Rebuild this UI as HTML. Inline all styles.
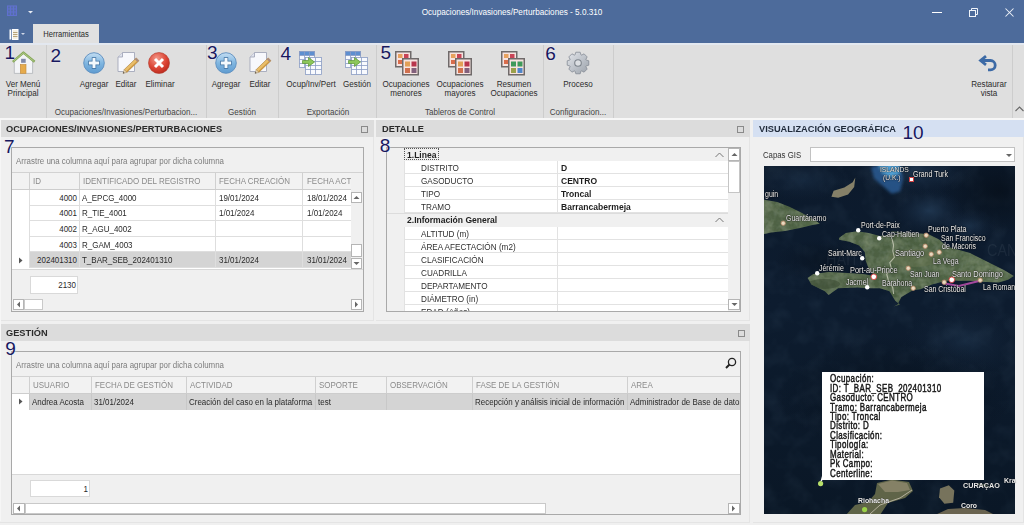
<!DOCTYPE html><html><head><meta charset="utf-8"><style>
html,body{margin:0;padding:0;width:1024px;height:525px;overflow:hidden;background:#e3e3e3;font-family:"Liberation Sans",sans-serif;}
#root{position:relative;width:1024px;height:525px;overflow:hidden;}
.t{position:absolute;white-space:nowrap;}
.n{position:absolute;color:#18185e;line-height:1;font-family:"Liberation Sans",sans-serif;text-shadow:0 0 2px rgba(240,240,255,0.9);}
</style></head><body><div id="root">
<div style="position:absolute;left:0px;top:0px;width:1024px;height:43px;background:#4d6b9b"></div>
<div class="t" style="left:512px;top:6.0px;font-size:9.7px;font-weight:400;color:#ffffff;line-height:12px;transform:translateX(-50%) scaleX(0.8428);transform-origin:50% 0;">Ocupaciones/Invasiones/Perturbaciones - 5.0.310</div>
<div style="position:absolute;left:932px;top:12px;width:10px;height:1px;background:#fff"></div>
<svg style="position:absolute;left:969px;top:8px" width="9" height="9" viewBox="0 0 9 9"><rect x="0.5" y="2.5" width="6" height="6" fill="none" stroke="#f0f4fa"/><path d="M2.5 2.5V0.5H8.5V6.5H6.5" fill="none" stroke="#f0f4fa"/></svg>
<svg style="position:absolute;left:1005px;top:8px" width="9" height="9" viewBox="0 0 9 9"><path d="M0.5 0.5L8.5 8.5M8.5 0.5L0.5 8.5" stroke="#f0f4fa" stroke-width="1.05"/></svg>
<svg style="position:absolute;left:6px;top:4px" width="12" height="13" viewBox="0 0 12 13"><g opacity="0.8"><rect x="1" y="1.5" width="9.5" height="10" fill="#6a78d8" opacity="0.35"/><g stroke="#6472dc" stroke-width="1" fill="none"><rect x="1.5" y="2" width="9" height="9.5"/><path d="M4.5 2V11.5M7.5 2V11.5M1.5 5H10.5M1.5 8H10.5"/></g></g></svg>
<svg style="position:absolute;left:27.5px;top:11px" width="5" height="3" viewBox="0 0 5 3"><path d="M0 0H5L2.5 2.5Z" fill="#e8ecf4"/></svg>
<svg style="position:absolute;left:9px;top:29px" width="10" height="11" viewBox="0 0 10 11"><rect x="0.5" y="0.5" width="1.8" height="10" fill="#fff"/><rect x="3.5" y="0.5" width="5.5" height="10" fill="#f4f0e4" stroke="#fff"/><path d="M4 3.5H8.5M4 5.5H8.5M4 7.5H8.5" stroke="#b8a47a"/></svg>
<svg style="position:absolute;left:21px;top:33px" width="4" height="3" viewBox="0 0 4 3"><path d="M0 0H4L2 2Z" fill="#d0d8e8"/></svg>
<div style="position:absolute;left:33px;top:24px;width:66px;height:21px;background:#e1e1e1"></div>
<div class="t" style="left:66px;top:28.0px;font-size:9.7px;font-weight:400;color:#2a2a2a;line-height:12px;transform:translateX(-50%) scaleX(0.784);transform-origin:50% 0;">Herramientas</div>
<div style="position:absolute;left:0px;top:43px;width:1024px;height:2px;background:#e3e8f0"></div>
<div style="position:absolute;left:0px;top:45px;width:1024px;height:73px;background:#dfdfdf"></div>
<div style="position:absolute;left:46px;top:45px;width:1px;height:73px;background:#cdcdcd"></div>
<div style="position:absolute;left:206px;top:45px;width:1px;height:73px;background:#cdcdcd"></div>
<div style="position:absolute;left:278px;top:45px;width:1px;height:73px;background:#cdcdcd"></div>
<div style="position:absolute;left:376px;top:45px;width:1px;height:73px;background:#cdcdcd"></div>
<div style="position:absolute;left:543px;top:45px;width:1px;height:73px;background:#cdcdcd"></div>
<div style="position:absolute;left:613px;top:45px;width:1px;height:73px;background:#cdcdcd"></div>
<div style="position:absolute;left:1012px;top:45px;width:1px;height:73px;background:#cdcdcd"></div>
<svg style="position:absolute;left:11px;top:50px" width="26" height="25" viewBox="0 0 26 25"><path d="M3.3 10.5 L12.4 3.2 L21.6 10.5 V23.4 H3.3 Z" fill="#f3f4f7" stroke="#aeb2b8" stroke-width="0.8"/>
<path d="M1.8 11.8 L12.4 2.6 L23.6 11.8" fill="none" stroke="#86a85a" stroke-width="2.4" stroke-linejoin="round"/>
<path d="M2.6 11.2 L12.4 2.9 L22.8 11.2" fill="none" stroke="#b9d08e" stroke-width="0.8" stroke-linejoin="round"/>
<rect x="10.1" y="8.8" width="4.6" height="4" fill="#7f89a8"/>
<rect x="9.3" y="14.5" width="5.7" height="8.8" fill="#e6ab4c" stroke="#c28634" stroke-width="0.6"/></svg>
<div class="n" style="left:4.5px;top:43px;font-size:19px">1</div>
<div class="t" style="left:23px;top:77.6px;font-size:9.7px;font-weight:400;color:#2c2c2c;line-height:12px;transform:translateX(-50%) scaleX(0.833);transform-origin:50% 0;">Ver Menú</div>
<div class="t" style="left:23px;top:87.0px;font-size:9.7px;font-weight:400;color:#2c2c2c;line-height:12px;transform:translateX(-50%) scaleX(0.833);transform-origin:50% 0;">Principal</div>
<div class="n" style="left:50.5px;top:46px;font-size:19px">2</div>
<svg style="position:absolute;left:83px;top:52px" width="22" height="22" viewBox="0 0 22 22"><defs><linearGradient id="gb" x1="0" y1="0" x2="0" y2="1"><stop offset="0" stop-color="#c4def3"/><stop offset="0.5" stop-color="#80b6e0"/><stop offset="1" stop-color="#5f9bd0"/></linearGradient></defs>
<circle cx="11" cy="11" r="10.3" fill="url(#gb)" stroke="#5d8fbf" stroke-width="0.9"/>
<path d="M11 5.2V16.8M5.2 11H16.8" stroke="#3f6f9f" stroke-width="4.4"/>
<path d="M11 5.9V16.1M5.9 11H16.1" stroke="#f4f9fd" stroke-width="3"/></svg>
<svg style="position:absolute;left:117px;top:52px" width="24" height="24" viewBox="0 0 24 24"><path d="M5.5 0.5 H17.5 V19.5 H1 V5 Z" fill="#f7f8fc" stroke="#a4a8ba" stroke-width="0.9"/>
<path d="M5.5 0.5 V5 H1" fill="#dfe2ec" stroke="#a4a8ba" stroke-width="0.9"/>
<polygon points="7.2,17.6 9.84,20.34 21.92,8.67 19.28,5.93" fill="#e9bd68" stroke="#a77d3a" stroke-width="0.6"/>
<polygon points="9.84,20.34 21.92,8.67 21.2,7.95 9.1,19.6" fill="#c8933e"/>
<polygon points="19.28,5.93 21.92,8.67 20.48,10.06 17.84,7.32" fill="#a88a80"/>
<polygon points="6,21.4 7.2,17.6 9.84,20.34" fill="#ead8b4" stroke="#8a6a40" stroke-width="0.4"/>
<polygon points="6,21.4 6.5,19.8 7.6,20.9" fill="#444"/></svg>
<svg style="position:absolute;left:148px;top:52px" width="22" height="22" viewBox="0 0 22 22"><defs><radialGradient id="gr" cx="40%" cy="30%" r="75%"><stop offset="0" stop-color="#f39a8a"/><stop offset="0.6" stop-color="#dc4535"/><stop offset="1" stop-color="#b8281c"/></radialGradient></defs>
<circle cx="11" cy="11" r="10.5" fill="url(#gr)" stroke="#b03a2c" stroke-width="0.6"/>
<path d="M7 7L15 15M15 7L7 15" stroke="#fff" stroke-width="3"/></svg>
<div class="t" style="left:94.4px;top:77.6px;font-size:9.7px;font-weight:400;color:#2c2c2c;line-height:12px;transform:translateX(-50%) scaleX(0.833);transform-origin:50% 0;">Agregar</div>
<div class="t" style="left:126.4px;top:77.6px;font-size:9.7px;font-weight:400;color:#2c2c2c;line-height:12px;transform:translateX(-50%) scaleX(0.833);transform-origin:50% 0;">Editar</div>
<div class="t" style="left:159.5px;top:77.6px;font-size:9.7px;font-weight:400;color:#2c2c2c;line-height:12px;transform:translateX(-50%) scaleX(0.833);transform-origin:50% 0;">Eliminar</div>
<div class="t" style="left:126px;top:105.7px;font-size:9.7px;font-weight:400;color:#454545;line-height:12px;transform:translateX(-50%) scaleX(0.833);transform-origin:50% 0;">Ocupaciones/Invasiones/Perturbacion...</div>
<div class="n" style="left:207px;top:43px;font-size:19px">3</div>
<svg style="position:absolute;left:215px;top:52px" width="22" height="22" viewBox="0 0 22 22"><defs><linearGradient id="gb" x1="0" y1="0" x2="0" y2="1"><stop offset="0" stop-color="#c4def3"/><stop offset="0.5" stop-color="#80b6e0"/><stop offset="1" stop-color="#5f9bd0"/></linearGradient></defs>
<circle cx="11" cy="11" r="10.3" fill="url(#gb)" stroke="#5d8fbf" stroke-width="0.9"/>
<path d="M11 5.2V16.8M5.2 11H16.8" stroke="#3f6f9f" stroke-width="4.4"/>
<path d="M11 5.9V16.1M5.9 11H16.1" stroke="#f4f9fd" stroke-width="3"/></svg>
<svg style="position:absolute;left:249px;top:52px" width="24" height="24" viewBox="0 0 24 24"><path d="M5.5 0.5 H17.5 V19.5 H1 V5 Z" fill="#f7f8fc" stroke="#a4a8ba" stroke-width="0.9"/>
<path d="M5.5 0.5 V5 H1" fill="#dfe2ec" stroke="#a4a8ba" stroke-width="0.9"/>
<polygon points="7.2,17.6 9.84,20.34 21.92,8.67 19.28,5.93" fill="#e9bd68" stroke="#a77d3a" stroke-width="0.6"/>
<polygon points="9.84,20.34 21.92,8.67 21.2,7.95 9.1,19.6" fill="#c8933e"/>
<polygon points="19.28,5.93 21.92,8.67 20.48,10.06 17.84,7.32" fill="#a88a80"/>
<polygon points="6,21.4 7.2,17.6 9.84,20.34" fill="#ead8b4" stroke="#8a6a40" stroke-width="0.4"/>
<polygon points="6,21.4 6.5,19.8 7.6,20.9" fill="#444"/></svg>
<div class="t" style="left:226px;top:77.6px;font-size:9.7px;font-weight:400;color:#2c2c2c;line-height:12px;transform:translateX(-50%) scaleX(0.833);transform-origin:50% 0;">Agregar</div>
<div class="t" style="left:260px;top:77.6px;font-size:9.7px;font-weight:400;color:#2c2c2c;line-height:12px;transform:translateX(-50%) scaleX(0.833);transform-origin:50% 0;">Editar</div>
<div class="t" style="left:241.5px;top:105.7px;font-size:9.7px;font-weight:400;color:#454545;line-height:12px;transform:translateX(-50%) scaleX(0.833);transform-origin:50% 0;">Gestión</div>
<div class="n" style="left:280.5px;top:43.7px;font-size:19px">4</div>
<svg style="position:absolute;left:299px;top:51px" width="23" height="24" viewBox="0 0 23 24"><g stroke="#8a9cc4" stroke-width="0.8">
<rect x="0.5" y="0.5" width="15" height="16" fill="#f8fafe"/>
<rect x="0.5" y="0.5" width="15" height="4" fill="#5d8fd0"/>
<path d="M0.5 8.5H15.5M0.5 12.5H15.5M5.5 0.5V16.5M10.5 0.5V16.5" fill="none"/>
<rect x="6.5" y="6.5" width="16" height="17" fill="#f8fafe"/>
<path d="M6.5 10.5H22.5M6.5 14.5H22.5M6.5 18.5H22.5M11.5 6.5V23.5M16.5 6.5V23.5" fill="none"/>
</g>
<path d="M3.5 9.5H9.5V6.5L15.5 11L9.5 15.5V12.5H3.5Z" fill="#8cc65a" stroke="#5a9232" stroke-width="0.7"/></svg>
<svg style="position:absolute;left:345px;top:51px" width="23" height="24" viewBox="0 0 23 24"><g stroke="#8a9cc4" stroke-width="0.8">
<rect x="0.5" y="0.5" width="15" height="16" fill="#f8fafe"/>
<rect x="0.5" y="0.5" width="15" height="4" fill="#5d8fd0"/>
<path d="M0.5 8.5H15.5M0.5 12.5H15.5M5.5 0.5V16.5M10.5 0.5V16.5" fill="none"/>
<rect x="6.5" y="6.5" width="16" height="17" fill="#f8fafe"/>
<path d="M6.5 10.5H22.5M6.5 14.5H22.5M6.5 18.5H22.5M11.5 6.5V23.5M16.5 6.5V23.5" fill="none"/>
</g>
<path d="M3.5 9.5H9.5V6.5L15.5 11L9.5 15.5V12.5H3.5Z" fill="#8cc65a" stroke="#5a9232" stroke-width="0.7"/></svg>
<div class="t" style="left:310.6px;top:77.6px;font-size:9.7px;font-weight:400;color:#2c2c2c;line-height:12px;transform:translateX(-50%) scaleX(0.833);transform-origin:50% 0;">Ocup/Inv/Pert</div>
<div class="t" style="left:356.8px;top:77.6px;font-size:9.7px;font-weight:400;color:#2c2c2c;line-height:12px;transform:translateX(-50%) scaleX(0.833);transform-origin:50% 0;">Gestión</div>
<div class="t" style="left:327.5px;top:105.7px;font-size:9.7px;font-weight:400;color:#454545;line-height:12px;transform:translateX(-50%) scaleX(0.833);transform-origin:50% 0;">Exportación</div>
<div class="n" style="left:380.5px;top:43px;font-size:19px">5</div>
<svg style="position:absolute;left:395px;top:51px" width="24" height="25" viewBox="0 0 24 25"><rect x="0.75" y="0.75" width="15" height="15" fill="#f7e3e0" stroke="#6f6a6a" stroke-width="1.5"/>
<rect x="3" y="3" width="4.5" height="4" fill="#e8a25e"/><rect x="9" y="3" width="4.5" height="4" fill="#c94457"/>
<rect x="3" y="9" width="4.5" height="4" fill="#d86c4c"/>
<rect x="7.75" y="7.75" width="15.5" height="16" fill="#f7e3e0" stroke="#6f6a6a" stroke-width="1.5"/>
<rect x="10" y="10.5" width="5" height="5" fill="#e2a057"/><rect x="16.5" y="10.5" width="5" height="5" fill="#b8344c"/>
<rect x="10" y="17" width="5" height="5" fill="#d0704e"/><rect x="16.5" y="17" width="5" height="5" fill="#82607c"/></svg>
<svg style="position:absolute;left:448px;top:51px" width="24" height="25" viewBox="0 0 24 25"><rect x="0.75" y="0.75" width="15" height="15" fill="#f7e3e0" stroke="#6f6a6a" stroke-width="1.5"/>
<rect x="3" y="3" width="4.5" height="4" fill="#e8a25e"/><rect x="9" y="3" width="4.5" height="4" fill="#c94457"/>
<rect x="3" y="9" width="4.5" height="4" fill="#d86c4c"/>
<rect x="7.75" y="7.75" width="15.5" height="16" fill="#f7e3e0" stroke="#6f6a6a" stroke-width="1.5"/>
<rect x="10" y="10.5" width="5" height="5" fill="#e2a057"/><rect x="16.5" y="10.5" width="5" height="5" fill="#b8344c"/>
<rect x="10" y="17" width="5" height="5" fill="#d0704e"/><rect x="16.5" y="17" width="5" height="5" fill="#82607c"/></svg>
<svg style="position:absolute;left:501px;top:51px" width="24" height="25" viewBox="0 0 24 25"><rect x="0.75" y="0.75" width="15" height="15" fill="#f7e3e0" stroke="#6f6a6a" stroke-width="1.5"/>
<rect x="3" y="3" width="4.5" height="4" fill="#e8a25e"/><rect x="9" y="3" width="4.5" height="4" fill="#c94457"/>
<rect x="3" y="9" width="4.5" height="4" fill="#d86c4c"/>
<rect x="7.75" y="7.75" width="15.5" height="16" fill="#f7e3e0" stroke="#6f6a6a" stroke-width="1.5"/>
<rect x="10" y="10.5" width="5" height="5" fill="#3f9a5a"/><rect x="16.5" y="10.5" width="5" height="5" fill="#3f9a5a"/>
<rect x="10" y="17" width="5" height="5" fill="#9aa04a"/><rect x="16.5" y="17" width="5" height="5" fill="#4f86c9"/></svg>
<div class="t" style="left:406.4px;top:77.6px;font-size:9.7px;font-weight:400;color:#2c2c2c;line-height:12px;transform:translateX(-50%) scaleX(0.833);transform-origin:50% 0;">Ocupaciones</div>
<div class="t" style="left:406.4px;top:87.0px;font-size:9.7px;font-weight:400;color:#2c2c2c;line-height:12px;transform:translateX(-50%) scaleX(0.833);transform-origin:50% 0;">menores</div>
<div class="t" style="left:459.5px;top:77.6px;font-size:9.7px;font-weight:400;color:#2c2c2c;line-height:12px;transform:translateX(-50%) scaleX(0.833);transform-origin:50% 0;">Ocupaciones</div>
<div class="t" style="left:459.5px;top:87.0px;font-size:9.7px;font-weight:400;color:#2c2c2c;line-height:12px;transform:translateX(-50%) scaleX(0.833);transform-origin:50% 0;">mayores</div>
<div class="t" style="left:513.5px;top:77.6px;font-size:9.7px;font-weight:400;color:#2c2c2c;line-height:12px;transform:translateX(-50%) scaleX(0.833);transform-origin:50% 0;">Resumen</div>
<div class="t" style="left:513.5px;top:87.0px;font-size:9.7px;font-weight:400;color:#2c2c2c;line-height:12px;transform:translateX(-50%) scaleX(0.833);transform-origin:50% 0;">Ocupaciones</div>
<div class="t" style="left:460px;top:105.7px;font-size:9.7px;font-weight:400;color:#454545;line-height:12px;transform:translateX(-50%) scaleX(0.833);transform-origin:50% 0;">Tableros de Control</div>
<div class="n" style="left:545.3px;top:43.7px;font-size:19px">6</div>
<svg style="position:absolute;left:565.5px;top:51px" width="24" height="24" viewBox="0 0 24 24"><defs><linearGradient id="gg" x1="0" y1="0" x2="1" y2="1"><stop offset="0" stop-color="#e4e7ec"/><stop offset="1" stop-color="#9aa1aa"/></linearGradient></defs>
<polygon points="8.97,3.95 9.81,1.22 14.19,1.22 15.03,3.95 15.55,4.17 18.08,2.83 21.17,5.92 19.83,8.45 20.05,8.97 22.78,9.81 22.78,14.19 20.05,15.03 19.83,15.55 21.17,18.08 18.08,21.17 15.55,19.83 15.03,20.05 14.19,22.78 9.81,22.78 8.97,20.05 8.45,19.83 5.92,21.17 2.83,18.08 4.17,15.55 3.95,15.03 1.22,14.19 1.22,9.81 3.95,8.97 4.17,8.45 2.83,5.92 5.92,2.83 8.45,4.17" fill="url(#gg)" stroke="#858c95" stroke-width="0.8" stroke-linejoin="round"/>
<circle cx="12" cy="12" r="3.3" fill="#dcdfe3" stroke="#7d848c" stroke-width="1.1"/></svg>
<div class="t" style="left:577.7px;top:77.6px;font-size:9.7px;font-weight:400;color:#2c2c2c;line-height:12px;transform:translateX(-50%) scaleX(0.833);transform-origin:50% 0;">Proceso</div>
<div class="t" style="left:578px;top:105.7px;font-size:9.7px;font-weight:400;color:#454545;line-height:12px;transform:translateX(-50%) scaleX(0.833);transform-origin:50% 0;">Configuracion...</div>
<svg style="position:absolute;left:976px;top:52px" width="24" height="22" viewBox="0 0 24 22"><path d="M5 8.5 H14.5 A4.7 4.7 0 0 1 14.5 17.9 H12" fill="none" stroke="#3c6aa6" stroke-width="2.8"/>
<path d="M10 4.2 L4.6 8.5 L10 12.8" fill="none" stroke="#3c6aa6" stroke-width="2.8" stroke-linejoin="miter"/></svg>
<div class="t" style="left:988.5px;top:77.6px;font-size:9.7px;font-weight:400;color:#2c2c2c;line-height:12px;transform:translateX(-50%) scaleX(0.833);transform-origin:50% 0;">Restaurar</div>
<div class="t" style="left:988.5px;top:87.0px;font-size:9.7px;font-weight:400;color:#2c2c2c;line-height:12px;transform:translateX(-50%) scaleX(0.833);transform-origin:50% 0;">vista</div>
<svg style="position:absolute;left:1015px;top:106px" width="9" height="6" viewBox="0 0 9 6"><path d="M0.5 5L4.5 1L8.5 5" fill="none" stroke="#666" stroke-width="1.1"/></svg>
<div style="position:absolute;left:0px;top:118px;width:1024px;height:407px;background:#f0f0f0"></div>
<div style="position:absolute;left:0px;top:118px;width:1024px;height:2px;background:#f7f7f7"></div>
<div style="position:absolute;left:0px;top:120px;width:374px;height:201px;background:#f0f0f0;border-right:1px solid #e4e4e4;border-bottom:1px solid #e4e4e4;box-sizing:border-box"></div>
<div style="position:absolute;left:0px;top:120px;width:374px;height:17px;background:#dcdcdc"></div>
<div class="t" style="left:6px;top:122.5px;font-size:9.4px;font-weight:700;color:#2b2b2b;line-height:12px;transform:scaleX(0.985);transform-origin:0 0;">OCUPACIONES/INVASIONES/PERTURBACIONES</div>
<div style="position:absolute;left:361px;top:126px;width:5px;height:5px;border:1px solid #8a8a8a;background:transparent"></div>
<div style="position:absolute;left:376px;top:120px;width:374px;height:201px;background:#f0f0f0;border-right:1px solid #e4e4e4;border-bottom:1px solid #e4e4e4;box-sizing:border-box"></div>
<div style="position:absolute;left:376px;top:120px;width:374px;height:17px;background:#dcdcdc"></div>
<div class="t" style="left:382px;top:122.5px;font-size:9.4px;font-weight:700;color:#2b2b2b;line-height:12px;transform:scaleX(0.985);transform-origin:0 0;">DETALLE</div>
<div style="position:absolute;left:737px;top:126px;width:5px;height:5px;border:1px solid #8a8a8a;background:transparent"></div>
<div style="position:absolute;left:0px;top:324px;width:750px;height:199px;background:#f0f0f0;border-right:1px solid #e4e4e4;border-bottom:1px solid #e4e4e4;box-sizing:border-box"></div>
<div style="position:absolute;left:0px;top:324px;width:750px;height:17px;background:#dcdcdc"></div>
<div class="t" style="left:6px;top:326.5px;font-size:9.4px;font-weight:700;color:#2b2b2b;line-height:12px;transform:scaleX(0.985);transform-origin:0 0;">GESTIÓN</div>
<div style="position:absolute;left:738px;top:330px;width:5px;height:5px;border:1px solid #8a8a8a;background:transparent"></div>
<div style="position:absolute;left:753px;top:120px;width:271px;height:403px;background:#f0f0f0;border-right:1px solid #e4e4e4;border-bottom:1px solid #e4e4e4;box-sizing:border-box"></div>
<div style="position:absolute;left:753px;top:120px;width:271px;height:17px;background:#d5e0f2"></div>
<div class="t" style="left:759px;top:122.5px;font-size:9.4px;font-weight:700;color:#1f2a3a;line-height:12px;transform:scaleX(0.985);transform-origin:0 0;">VISUALIZACIÓN GEOGRÁFICA</div>
<div style="position:absolute;left:0px;top:120px;width:1px;height:401px;background:#f6f6f6"></div>
<div style="position:absolute;left:11px;top:147px;width:353px;height:165px;border:1px solid #a9a9a9;box-sizing:border-box;background:#f0f0f0"></div>
<div class="t" style="left:16px;top:154.5px;font-size:9.7px;font-weight:400;color:#7c7c7c;line-height:12px;transform:scaleX(0.8182999999999999);transform-origin:0 0;">Arrastre una columna aquí para agrupar por dicha columna</div>
<div style="position:absolute;left:12px;top:172px;width:351px;height:1px;background:#d2d2d2"></div>
<div style="position:absolute;left:12px;top:173px;width:339px;height:16px;background:#f2f2f2"></div>
<div style="position:absolute;left:12px;top:189px;width:339px;height:1px;background:#cdcdcd"></div>
<div style="position:absolute;left:29px;top:173px;width:1px;height:16px;background:#d0d0d0"></div>
<div style="position:absolute;left:79px;top:173px;width:1px;height:16px;background:#d0d0d0"></div>
<div style="position:absolute;left:215px;top:173px;width:1px;height:16px;background:#d0d0d0"></div>
<div style="position:absolute;left:302px;top:173px;width:1px;height:16px;background:#d0d0d0"></div>
<div class="t" style="left:33px;top:175.0px;font-size:9.7px;font-weight:400;color:#8a8a8a;line-height:12px;transform:scaleX(0.8231999999999999);transform-origin:0 0;">ID</div>
<div class="t" style="left:83px;top:175.0px;font-size:9.7px;font-weight:400;color:#8a8a8a;line-height:12px;transform:scaleX(0.8231999999999999);transform-origin:0 0;">IDENTIFICADO DEL REGISTRO</div>
<div class="t" style="left:219px;top:175.0px;font-size:9.7px;font-weight:400;color:#8a8a8a;line-height:12px;transform:scaleX(0.8231999999999999);transform-origin:0 0;">FECHA CREACIÓN</div>
<div style="position:absolute;left:303px;top:173px;width:48px;height:16px;overflow:hidden">
<div class="t" style="left:4px;top:2.0px;font-size:9.7px;font-weight:400;color:#8a8a8a;line-height:12px;transform:scaleX(0.8231999999999999);transform-origin:0 0;">FECHA ACTUALIZACIÓN</div>
</div>
<div style="position:absolute;left:12px;top:190px;width:339px;height:79px;background:#ffffff"></div>
<div style="position:absolute;left:29px;top:205px;width:322px;height:1px;background:#dedede"></div>
<div style="position:absolute;left:29px;top:190px;width:1px;height:15.5px;background:#dedede"></div>
<div style="position:absolute;left:79px;top:190px;width:1px;height:15.5px;background:#dedede"></div>
<div style="position:absolute;left:215px;top:190px;width:1px;height:15.5px;background:#dedede"></div>
<div style="position:absolute;left:302px;top:190px;width:1px;height:15.5px;background:#dedede"></div>
<div class="t" style="left:77px;top:191.8px;font-size:9.7px;font-weight:400;color:#2a2a2a;line-height:12px;transform:translateX(-100%) scaleX(0.8231999999999999);transform-origin:100% 0;">4000</div>
<div class="t" style="left:82px;top:191.8px;font-size:9.7px;font-weight:400;color:#2a2a2a;line-height:12px;transform:scaleX(0.8231999999999999);transform-origin:0 0;">A_EPCG_4000</div>
<div class="t" style="left:219px;top:191.8px;font-size:9.7px;font-weight:400;color:#2a2a2a;line-height:12px;transform:scaleX(0.8231999999999999);transform-origin:0 0;">19/01/2024</div>
<div style="position:absolute;left:303px;top:190px;width:48px;height:15px;overflow:hidden">
<div class="t" style="left:4px;top:1.8px;font-size:9.7px;font-weight:400;color:#2a2a2a;line-height:12px;transform:scaleX(0.8231999999999999);transform-origin:0 0;">18/01/2024</div>
</div>
<div style="position:absolute;left:29px;top:220px;width:322px;height:1px;background:#dedede"></div>
<div style="position:absolute;left:29px;top:205.5px;width:1px;height:15.5px;background:#dedede"></div>
<div style="position:absolute;left:79px;top:205.5px;width:1px;height:15.5px;background:#dedede"></div>
<div style="position:absolute;left:215px;top:205.5px;width:1px;height:15.5px;background:#dedede"></div>
<div style="position:absolute;left:302px;top:205.5px;width:1px;height:15.5px;background:#dedede"></div>
<div class="t" style="left:77px;top:207.2px;font-size:9.7px;font-weight:400;color:#2a2a2a;line-height:12px;transform:translateX(-100%) scaleX(0.8231999999999999);transform-origin:100% 0;">4001</div>
<div class="t" style="left:82px;top:207.2px;font-size:9.7px;font-weight:400;color:#2a2a2a;line-height:12px;transform:scaleX(0.8231999999999999);transform-origin:0 0;">R_TIE_4001</div>
<div class="t" style="left:219px;top:207.2px;font-size:9.7px;font-weight:400;color:#2a2a2a;line-height:12px;transform:scaleX(0.8231999999999999);transform-origin:0 0;">1/01/2024</div>
<div style="position:absolute;left:303px;top:205.5px;width:48px;height:15px;overflow:hidden">
<div class="t" style="left:4px;top:1.8px;font-size:9.7px;font-weight:400;color:#2a2a2a;line-height:12px;transform:scaleX(0.8231999999999999);transform-origin:0 0;">1/01/2024</div>
</div>
<div style="position:absolute;left:29px;top:236px;width:322px;height:1px;background:#dedede"></div>
<div style="position:absolute;left:29px;top:221px;width:1px;height:15.699999999999989px;background:#dedede"></div>
<div style="position:absolute;left:79px;top:221px;width:1px;height:15.699999999999989px;background:#dedede"></div>
<div style="position:absolute;left:215px;top:221px;width:1px;height:15.699999999999989px;background:#dedede"></div>
<div style="position:absolute;left:302px;top:221px;width:1px;height:15.699999999999989px;background:#dedede"></div>
<div class="t" style="left:77px;top:222.8px;font-size:9.7px;font-weight:400;color:#2a2a2a;line-height:12px;transform:translateX(-100%) scaleX(0.8231999999999999);transform-origin:100% 0;">4002</div>
<div class="t" style="left:82px;top:222.8px;font-size:9.7px;font-weight:400;color:#2a2a2a;line-height:12px;transform:scaleX(0.8231999999999999);transform-origin:0 0;">R_AGU_4002</div>
<div class="t" style="left:219px;top:222.8px;font-size:9.7px;font-weight:400;color:#2a2a2a;line-height:12px;transform:scaleX(0.8231999999999999);transform-origin:0 0;"></div>
<div style="position:absolute;left:303px;top:221px;width:48px;height:15px;overflow:hidden">
<div class="t" style="left:4px;top:1.8px;font-size:9.7px;font-weight:400;color:#2a2a2a;line-height:12px;transform:scaleX(0.8231999999999999);transform-origin:0 0;"></div>
</div>
<div style="position:absolute;left:29px;top:251px;width:322px;height:1px;background:#dedede"></div>
<div style="position:absolute;left:29px;top:236.7px;width:1px;height:15.600000000000023px;background:#dedede"></div>
<div style="position:absolute;left:79px;top:236.7px;width:1px;height:15.600000000000023px;background:#dedede"></div>
<div style="position:absolute;left:215px;top:236.7px;width:1px;height:15.600000000000023px;background:#dedede"></div>
<div style="position:absolute;left:302px;top:236.7px;width:1px;height:15.600000000000023px;background:#dedede"></div>
<div class="t" style="left:77px;top:238.5px;font-size:9.7px;font-weight:400;color:#2a2a2a;line-height:12px;transform:translateX(-100%) scaleX(0.8231999999999999);transform-origin:100% 0;">4003</div>
<div class="t" style="left:82px;top:238.5px;font-size:9.7px;font-weight:400;color:#2a2a2a;line-height:12px;transform:scaleX(0.8231999999999999);transform-origin:0 0;">R_GAM_4003</div>
<div class="t" style="left:219px;top:238.5px;font-size:9.7px;font-weight:400;color:#2a2a2a;line-height:12px;transform:scaleX(0.8231999999999999);transform-origin:0 0;"></div>
<div style="position:absolute;left:303px;top:236.7px;width:48px;height:15px;overflow:hidden">
<div class="t" style="left:4px;top:1.8px;font-size:9.7px;font-weight:400;color:#2a2a2a;line-height:12px;transform:scaleX(0.8231999999999999);transform-origin:0 0;"></div>
</div>
<div style="position:absolute;left:29px;top:252.3px;width:322px;height:16.19999999999999px;background:#d4d4d4"></div>
<div style="position:absolute;left:29px;top:267px;width:322px;height:1px;background:#dedede"></div>
<div style="position:absolute;left:29px;top:252.3px;width:1px;height:16.19999999999999px;background:#dedede"></div>
<div style="position:absolute;left:79px;top:252.3px;width:1px;height:16.19999999999999px;background:#dedede"></div>
<div style="position:absolute;left:215px;top:252.3px;width:1px;height:16.19999999999999px;background:#dedede"></div>
<div style="position:absolute;left:302px;top:252.3px;width:1px;height:16.19999999999999px;background:#dedede"></div>
<div class="t" style="left:77px;top:254.4px;font-size:9.7px;font-weight:400;color:#2a2a2a;line-height:12px;transform:translateX(-100%) scaleX(0.8231999999999999);transform-origin:100% 0;">202401310</div>
<div class="t" style="left:82px;top:254.4px;font-size:9.7px;font-weight:400;color:#2a2a2a;line-height:12px;transform:scaleX(0.8231999999999999);transform-origin:0 0;">T_BAR_SEB_202401310</div>
<div class="t" style="left:219px;top:254.4px;font-size:9.7px;font-weight:400;color:#2a2a2a;line-height:12px;transform:scaleX(0.8231999999999999);transform-origin:0 0;">31/01/2024</div>
<div style="position:absolute;left:303px;top:252.3px;width:48px;height:15px;overflow:hidden">
<div class="t" style="left:4px;top:2.1px;font-size:9.7px;font-weight:400;color:#2a2a2a;line-height:12px;transform:scaleX(0.8231999999999999);transform-origin:0 0;">31/01/2024</div>
</div>
<svg style="position:absolute;left:18px;top:257px" width="5" height="7" viewBox="0 0 5 7"><path d="M1 0.5L4.5 3.5L1 6.5Z" fill="#555"/></svg>
<div style="position:absolute;left:351px;top:189px;width:11px;height:80px;background:#f0f0f0"></div>
<div style="position:absolute;left:351px;top:192px;width:11px;height:11px;background:#fff;border:1px solid #b5b5b5;box-sizing:border-box"></div>
<svg style="position:absolute;left:353px;top:195px" width="7" height="5" viewBox="0 0 7 5"><path d="M0.5 4L3.5 1L6.5 4Z" fill="#666"/></svg>
<div style="position:absolute;left:351px;top:244px;width:11px;height:13px;background:#fff;border:1px solid #b5b5b5;box-sizing:border-box"></div>
<div style="position:absolute;left:351px;top:258px;width:11px;height:11px;background:#fff;border:1px solid #b5b5b5;box-sizing:border-box"></div>
<svg style="position:absolute;left:353px;top:261px" width="7" height="5" viewBox="0 0 7 5"><path d="M0.5 1L3.5 4L6.5 1Z" fill="#666"/></svg>
<div style="position:absolute;left:12px;top:269px;width:351px;height:1px;background:#d8d8d8"></div>
<div style="position:absolute;left:30px;top:276px;width:48px;height:18px;background:#fff;border:1px solid #d9d9d9;box-sizing:border-box"></div>
<div class="t" style="left:76px;top:279.0px;font-size:9.7px;font-weight:400;color:#2a2a2a;line-height:12px;transform:translateX(-100%) scaleX(0.8231999999999999);transform-origin:100% 0;">2130</div>
<div style="position:absolute;left:12px;top:299px;width:351px;height:11px;background:#f0f0f0"></div>
<div style="position:absolute;left:13px;top:299px;width:11px;height:11px;background:#fff;border:1px solid #b5b5b5;box-sizing:border-box"></div>
<svg style="position:absolute;left:16px;top:301px" width="5" height="7" viewBox="0 0 5 7"><path d="M4 0.5L1 3.5L4 6.5Z" fill="#666"/></svg>
<div style="position:absolute;left:24px;top:299px;width:19px;height:11px;background:#fff;border:1px solid #c9c9c9;box-sizing:border-box"></div>
<div style="position:absolute;left:351px;top:299px;width:11px;height:11px;background:#fff;border:1px solid #b5b5b5;box-sizing:border-box"></div>
<svg style="position:absolute;left:354px;top:301px" width="5" height="7" viewBox="0 0 5 7"><path d="M1 0.5L4 3.5L1 6.5Z" fill="#666"/></svg>
<div class="n" style="left:4px;top:136.5px;font-size:19px">7</div>
<div style="position:absolute;left:386px;top:147px;width:355px;height:165px;border:1px solid #a9a9a9;box-sizing:border-box;background:#f0f0f0"></div>
<div style="position:absolute;left:387px;top:148px;width:341px;height:163px;overflow:hidden">
<div style="position:absolute;left:0px;top:0px;width:341px;height:14px;background:#f0f0f0"></div>
<div class="t" style="left:20px;top:1.0px;font-size:9.7px;font-weight:700;color:#222;line-height:12px;transform:scaleX(0.882);transform-origin:0 0;">1.Linea</div>
<svg style="position:absolute;left:328px;top:4px" width="9" height="6"><path d="M0.5 5L4.5 1L8.5 5" fill="none" stroke="#777" stroke-width="1"/></svg>
<div style="position:absolute;left:17px;top:0px;width:35px;height:12px;border:1px dotted #555;box-sizing:border-box"></div>
<div style="position:absolute;left:17px;top:13px;width:324px;height:13px;background:#fff"></div>
<div style="position:absolute;left:17px;top:25px;width:324px;height:1px;background:#e2e2e2"></div>
<div style="position:absolute;left:0px;top:13px;width:17px;height:13px;background:#f0f0f0"></div>
<div style="position:absolute;left:17px;top:13px;width:1px;height:13px;background:#e2e2e2"></div>
<div style="position:absolute;left:170px;top:13px;width:1px;height:13px;background:#e2e2e2"></div>
<div class="t" style="left:34px;top:13.5px;font-size:9.7px;font-weight:400;color:#2e2e2e;line-height:12px;transform:scaleX(0.8428);transform-origin:0 0;">DISTRITO</div>
<div class="t" style="left:174px;top:13.5px;font-size:9.7px;font-weight:700;color:#1e1e1e;line-height:12px;transform:scaleX(0.882);transform-origin:0 0;">D</div>
<div style="position:absolute;left:17px;top:26px;width:324px;height:13px;background:#fff"></div>
<div style="position:absolute;left:17px;top:38px;width:324px;height:1px;background:#e2e2e2"></div>
<div style="position:absolute;left:0px;top:26px;width:17px;height:13px;background:#f0f0f0"></div>
<div style="position:absolute;left:17px;top:26px;width:1px;height:13px;background:#e2e2e2"></div>
<div style="position:absolute;left:170px;top:26px;width:1px;height:13px;background:#e2e2e2"></div>
<div class="t" style="left:34px;top:26.5px;font-size:9.7px;font-weight:400;color:#2e2e2e;line-height:12px;transform:scaleX(0.8428);transform-origin:0 0;">GASODUCTO</div>
<div class="t" style="left:174px;top:26.5px;font-size:9.7px;font-weight:700;color:#1e1e1e;line-height:12px;transform:scaleX(0.882);transform-origin:0 0;">CENTRO</div>
<div style="position:absolute;left:17px;top:39px;width:324px;height:13px;background:#fff"></div>
<div style="position:absolute;left:17px;top:51px;width:324px;height:1px;background:#e2e2e2"></div>
<div style="position:absolute;left:0px;top:39px;width:17px;height:13px;background:#f0f0f0"></div>
<div style="position:absolute;left:17px;top:39px;width:1px;height:13px;background:#e2e2e2"></div>
<div style="position:absolute;left:170px;top:39px;width:1px;height:13px;background:#e2e2e2"></div>
<div class="t" style="left:34px;top:39.5px;font-size:9.7px;font-weight:400;color:#2e2e2e;line-height:12px;transform:scaleX(0.8428);transform-origin:0 0;">TIPO</div>
<div class="t" style="left:174px;top:39.5px;font-size:9.7px;font-weight:700;color:#1e1e1e;line-height:12px;transform:scaleX(0.882);transform-origin:0 0;">Troncal</div>
<div style="position:absolute;left:17px;top:52px;width:324px;height:13px;background:#fff"></div>
<div style="position:absolute;left:17px;top:64px;width:324px;height:1px;background:#e2e2e2"></div>
<div style="position:absolute;left:0px;top:52px;width:17px;height:13px;background:#f0f0f0"></div>
<div style="position:absolute;left:17px;top:52px;width:1px;height:13px;background:#e2e2e2"></div>
<div style="position:absolute;left:170px;top:52px;width:1px;height:13px;background:#e2e2e2"></div>
<div class="t" style="left:34px;top:52.5px;font-size:9.7px;font-weight:400;color:#2e2e2e;line-height:12px;transform:scaleX(0.8428);transform-origin:0 0;">TRAMO</div>
<div class="t" style="left:174px;top:52.5px;font-size:9.7px;font-weight:700;color:#1e1e1e;line-height:12px;transform:scaleX(0.882);transform-origin:0 0;">Barrancabermeja</div>
<div style="position:absolute;left:0px;top:65px;width:341px;height:14px;background:#f0f0f0"></div>
<div class="t" style="left:20px;top:66.0px;font-size:9.7px;font-weight:700;color:#222;line-height:12px;transform:scaleX(0.882);transform-origin:0 0;">2.Información General</div>
<svg style="position:absolute;left:328px;top:69px" width="9" height="6"><path d="M0.5 5L4.5 1L8.5 5" fill="none" stroke="#777" stroke-width="1"/></svg>
<div style="position:absolute;left:0px;top:65px;width:341px;height:1px;background:#dcdcdc"></div>
<div style="position:absolute;left:17px;top:79px;width:324px;height:13px;background:#fff"></div>
<div style="position:absolute;left:17px;top:91px;width:324px;height:1px;background:#e2e2e2"></div>
<div style="position:absolute;left:0px;top:79px;width:17px;height:13px;background:#f0f0f0"></div>
<div style="position:absolute;left:17px;top:79px;width:1px;height:13px;background:#e2e2e2"></div>
<div style="position:absolute;left:170px;top:79px;width:1px;height:13px;background:#e2e2e2"></div>
<div class="t" style="left:34px;top:79.5px;font-size:9.7px;font-weight:400;color:#2e2e2e;line-height:12px;transform:scaleX(0.8428);transform-origin:0 0;">ALTITUD (m)</div>
<div style="position:absolute;left:17px;top:92px;width:324px;height:13px;background:#fff"></div>
<div style="position:absolute;left:17px;top:104px;width:324px;height:1px;background:#e2e2e2"></div>
<div style="position:absolute;left:0px;top:92px;width:17px;height:13px;background:#f0f0f0"></div>
<div style="position:absolute;left:17px;top:92px;width:1px;height:13px;background:#e2e2e2"></div>
<div style="position:absolute;left:170px;top:92px;width:1px;height:13px;background:#e2e2e2"></div>
<div class="t" style="left:34px;top:92.5px;font-size:9.7px;font-weight:400;color:#2e2e2e;line-height:12px;transform:scaleX(0.8428);transform-origin:0 0;">ÁREA AFECTACIÓN (m2)</div>
<div style="position:absolute;left:17px;top:105px;width:324px;height:13px;background:#fff"></div>
<div style="position:absolute;left:17px;top:117px;width:324px;height:1px;background:#e2e2e2"></div>
<div style="position:absolute;left:0px;top:105px;width:17px;height:13px;background:#f0f0f0"></div>
<div style="position:absolute;left:17px;top:105px;width:1px;height:13px;background:#e2e2e2"></div>
<div style="position:absolute;left:170px;top:105px;width:1px;height:13px;background:#e2e2e2"></div>
<div class="t" style="left:34px;top:105.5px;font-size:9.7px;font-weight:400;color:#2e2e2e;line-height:12px;transform:scaleX(0.8428);transform-origin:0 0;">CLASIFICACIÓN</div>
<div style="position:absolute;left:17px;top:118px;width:324px;height:13px;background:#fff"></div>
<div style="position:absolute;left:17px;top:130px;width:324px;height:1px;background:#e2e2e2"></div>
<div style="position:absolute;left:0px;top:118px;width:17px;height:13px;background:#f0f0f0"></div>
<div style="position:absolute;left:17px;top:118px;width:1px;height:13px;background:#e2e2e2"></div>
<div style="position:absolute;left:170px;top:118px;width:1px;height:13px;background:#e2e2e2"></div>
<div class="t" style="left:34px;top:118.5px;font-size:9.7px;font-weight:400;color:#2e2e2e;line-height:12px;transform:scaleX(0.8428);transform-origin:0 0;">CUADRILLA</div>
<div style="position:absolute;left:17px;top:131px;width:324px;height:13px;background:#fff"></div>
<div style="position:absolute;left:17px;top:143px;width:324px;height:1px;background:#e2e2e2"></div>
<div style="position:absolute;left:0px;top:131px;width:17px;height:13px;background:#f0f0f0"></div>
<div style="position:absolute;left:17px;top:131px;width:1px;height:13px;background:#e2e2e2"></div>
<div style="position:absolute;left:170px;top:131px;width:1px;height:13px;background:#e2e2e2"></div>
<div class="t" style="left:34px;top:131.5px;font-size:9.7px;font-weight:400;color:#2e2e2e;line-height:12px;transform:scaleX(0.8428);transform-origin:0 0;">DEPARTAMENTO</div>
<div style="position:absolute;left:17px;top:144px;width:324px;height:13px;background:#fff"></div>
<div style="position:absolute;left:17px;top:156px;width:324px;height:1px;background:#e2e2e2"></div>
<div style="position:absolute;left:0px;top:144px;width:17px;height:13px;background:#f0f0f0"></div>
<div style="position:absolute;left:17px;top:144px;width:1px;height:13px;background:#e2e2e2"></div>
<div style="position:absolute;left:170px;top:144px;width:1px;height:13px;background:#e2e2e2"></div>
<div class="t" style="left:34px;top:144.5px;font-size:9.7px;font-weight:400;color:#2e2e2e;line-height:12px;transform:scaleX(0.8428);transform-origin:0 0;">DIÁMETRO (in)</div>
<div style="position:absolute;left:17px;top:157px;width:324px;height:13px;background:#fff"></div>
<div style="position:absolute;left:17px;top:169px;width:324px;height:1px;background:#e2e2e2"></div>
<div style="position:absolute;left:0px;top:157px;width:17px;height:13px;background:#f0f0f0"></div>
<div style="position:absolute;left:17px;top:157px;width:1px;height:13px;background:#e2e2e2"></div>
<div style="position:absolute;left:170px;top:157px;width:1px;height:13px;background:#e2e2e2"></div>
<div class="t" style="left:34px;top:157.5px;font-size:9.7px;font-weight:400;color:#2e2e2e;line-height:12px;transform:scaleX(0.8428);transform-origin:0 0;">EDAD (Años)</div>
</div>
<div style="position:absolute;left:728px;top:148px;width:12px;height:163px;background:#f0f0f0"></div>
<div style="position:absolute;left:728px;top:148px;width:12px;height:13px;background:#fff;border:1px solid #b5b5b5;box-sizing:border-box"></div>
<svg style="position:absolute;left:731px;top:152px" width="7" height="5" viewBox="0 0 7 5"><path d="M0.5 4L3.5 1L6.5 4Z" fill="#666"/></svg>
<div style="position:absolute;left:728px;top:161px;width:12px;height:32px;background:#fff;border:1px solid #c5c5c5;box-sizing:border-box"></div>
<div style="position:absolute;left:728px;top:299px;width:12px;height:11px;background:#fff;border:1px solid #b5b5b5;box-sizing:border-box"></div>
<svg style="position:absolute;left:731px;top:302px" width="7" height="5" viewBox="0 0 7 5"><path d="M0.5 1L3.5 4L6.5 1Z" fill="#666"/></svg>
<div class="n" style="left:379.8px;top:136.2px;font-size:19px">8</div>
<div style="position:absolute;left:11px;top:351px;width:730px;height:164px;border:1px solid #a9a9a9;box-sizing:border-box;background:#f0f0f0"></div>
<div class="t" style="left:16px;top:359.0px;font-size:9.7px;font-weight:400;color:#7c7c7c;line-height:12px;transform:scaleX(0.8182999999999999);transform-origin:0 0;">Arrastre una columna aquí para agrupar por dicha columna</div>
<svg style="position:absolute;left:725px;top:357px" width="12" height="12" viewBox="0 0 12 12"><circle cx="7" cy="5" r="3.6" fill="none" stroke="#222" stroke-width="1.3"/><path d="M4.5 7.5L1 11" stroke="#222" stroke-width="1.9"/></svg>
<div style="position:absolute;left:12px;top:376px;width:728px;height:1px;background:#d2d2d2"></div>
<div style="position:absolute;left:12px;top:377px;width:728px;height:16px;background:#f2f2f2"></div>
<div style="position:absolute;left:12px;top:393px;width:728px;height:1px;background:#cdcdcd"></div>
<div style="position:absolute;left:29px;top:377px;width:1px;height:16px;background:#d0d0d0"></div>
<div class="t" style="left:33px;top:379.0px;font-size:9.7px;font-weight:400;color:#8a8a8a;line-height:12px;transform:scaleX(0.8231999999999999);transform-origin:0 0;">USUARIO</div>
<div style="position:absolute;left:91px;top:377px;width:1px;height:16px;background:#d0d0d0"></div>
<div class="t" style="left:95px;top:379.0px;font-size:9.7px;font-weight:400;color:#8a8a8a;line-height:12px;transform:scaleX(0.8231999999999999);transform-origin:0 0;">FECHA DE GESTIÓN</div>
<div style="position:absolute;left:186px;top:377px;width:1px;height:16px;background:#d0d0d0"></div>
<div class="t" style="left:190px;top:379.0px;font-size:9.7px;font-weight:400;color:#8a8a8a;line-height:12px;transform:scaleX(0.8231999999999999);transform-origin:0 0;">ACTIVIDAD</div>
<div style="position:absolute;left:315px;top:377px;width:1px;height:16px;background:#d0d0d0"></div>
<div class="t" style="left:319px;top:379.0px;font-size:9.7px;font-weight:400;color:#8a8a8a;line-height:12px;transform:scaleX(0.8231999999999999);transform-origin:0 0;">SOPORTE</div>
<div style="position:absolute;left:386px;top:377px;width:1px;height:16px;background:#d0d0d0"></div>
<div class="t" style="left:390px;top:379.0px;font-size:9.7px;font-weight:400;color:#8a8a8a;line-height:12px;transform:scaleX(0.8231999999999999);transform-origin:0 0;">OBSERVACIÓN</div>
<div style="position:absolute;left:472px;top:377px;width:1px;height:16px;background:#d0d0d0"></div>
<div class="t" style="left:476px;top:379.0px;font-size:9.7px;font-weight:400;color:#8a8a8a;line-height:12px;transform:scaleX(0.8231999999999999);transform-origin:0 0;">FASE DE LA GESTIÓN</div>
<div style="position:absolute;left:627px;top:377px;width:1px;height:16px;background:#d0d0d0"></div>
<div class="t" style="left:631px;top:379.0px;font-size:9.7px;font-weight:400;color:#8a8a8a;line-height:12px;transform:scaleX(0.8231999999999999);transform-origin:0 0;">AREA</div>
<div style="position:absolute;left:12px;top:394px;width:728px;height:80px;background:#fff"></div>
<div style="position:absolute;left:29px;top:394px;width:711px;height:16px;background:#d4d4d4"></div>
<div style="position:absolute;left:29px;top:394px;width:1px;height:16px;background:#c8c8c8"></div>
<div style="position:absolute;left:91px;top:394px;width:1px;height:16px;background:#c8c8c8"></div>
<div style="position:absolute;left:186px;top:394px;width:1px;height:16px;background:#c8c8c8"></div>
<div style="position:absolute;left:315px;top:394px;width:1px;height:16px;background:#c8c8c8"></div>
<div style="position:absolute;left:386px;top:394px;width:1px;height:16px;background:#c8c8c8"></div>
<div style="position:absolute;left:472px;top:394px;width:1px;height:16px;background:#c8c8c8"></div>
<div style="position:absolute;left:627px;top:394px;width:1px;height:16px;background:#c8c8c8"></div>
<div style="position:absolute;left:12px;top:394px;width:728px;height:16px;overflow:hidden">
<div class="t" style="left:20px;top:2.0px;font-size:9.7px;font-weight:400;color:#2a2a2a;line-height:12px;transform:scaleX(0.8231999999999999);transform-origin:0 0;">Andrea Acosta</div>
<div class="t" style="left:82px;top:2.0px;font-size:9.7px;font-weight:400;color:#2a2a2a;line-height:12px;transform:scaleX(0.8231999999999999);transform-origin:0 0;">31/01/2024</div>
<div class="t" style="left:177px;top:2.0px;font-size:9.7px;font-weight:400;color:#2a2a2a;line-height:12px;transform:scaleX(0.8231999999999999);transform-origin:0 0;">Creación del caso en la plataforma</div>
<div class="t" style="left:306px;top:2.0px;font-size:9.7px;font-weight:400;color:#2a2a2a;line-height:12px;transform:scaleX(0.8231999999999999);transform-origin:0 0;">test</div>
<div class="t" style="left:377px;top:2.0px;font-size:9.7px;font-weight:400;color:#2a2a2a;line-height:12px;transform:scaleX(0.8231999999999999);transform-origin:0 0;"></div>
<div class="t" style="left:463px;top:2.0px;font-size:9.7px;font-weight:400;color:#2a2a2a;line-height:12px;transform:scaleX(0.8231999999999999);transform-origin:0 0;">Recepción y análisis inicial de información</div>
<div class="t" style="left:618px;top:2.0px;font-size:9.7px;font-weight:400;color:#2a2a2a;line-height:12px;transform:scaleX(0.8231999999999999);transform-origin:0 0;">Administrador de Base de datos</div>
</div>
<svg style="position:absolute;left:18px;top:398px" width="5" height="7" viewBox="0 0 5 7"><path d="M1 0.5L4.5 3.5L1 6.5Z" fill="#555"/></svg>
<div style="position:absolute;left:12px;top:474px;width:728px;height:1px;background:#d8d8d8"></div>
<div style="position:absolute;left:30px;top:480px;width:60px;height:17px;background:#fff;border:1px solid #d9d9d9;box-sizing:border-box"></div>
<div class="t" style="left:88px;top:482.5px;font-size:9.7px;font-weight:400;color:#2a2a2a;line-height:12px;transform:translateX(-100%) scaleX(0.8231999999999999);transform-origin:100% 0;">1</div>
<div style="position:absolute;left:12px;top:503px;width:728px;height:10px;background:#f0f0f0"></div>
<div style="position:absolute;left:13px;top:503px;width:12px;height:11px;background:#fff;border:1px solid #b5b5b5;box-sizing:border-box"></div>
<svg style="position:absolute;left:16px;top:505px" width="5" height="7" viewBox="0 0 5 7"><path d="M4 0.5L1 3.5L4 6.5Z" fill="#666"/></svg>
<div style="position:absolute;left:25px;top:503px;width:521px;height:11px;background:#fff;border:1px solid #c9c9c9;box-sizing:border-box"></div>
<div style="position:absolute;left:728px;top:503px;width:12px;height:11px;background:#fff;border:1px solid #b5b5b5;box-sizing:border-box"></div>
<svg style="position:absolute;left:731px;top:505px" width="5" height="7" viewBox="0 0 5 7"><path d="M1 0.5L4 3.5L1 6.5Z" fill="#666"/></svg>
<div class="n" style="left:5.3px;top:338.6px;font-size:19px">9</div>
<div class="n" style="left:902.5px;top:122.6px;font-size:19px">10</div>
<div class="t" style="left:763px;top:148.7px;font-size:9.7px;font-weight:400;color:#333;line-height:12px;transform:scaleX(0.8036);transform-origin:0 0;">Capas GIS</div>
<div style="position:absolute;left:810px;top:147px;width:205px;height:15px;background:#fff;border:1px solid #c2c2c2;box-sizing:border-box"></div>
<svg style="position:absolute;left:1006px;top:154px" width="6" height="4" viewBox="0 0 6 4"><path d="M0 0H6L3 3Z" fill="#666"/></svg>
<div style="position:absolute;left:764px;top:166px;width:251px;height:348px;overflow:hidden">
<svg style="position:absolute;left:0;top:0" width="251" height="348"><defs>
<radialGradient id="sh" cx="50%" cy="50%" r="50%"><stop offset="0" stop-color="#2a4664" stop-opacity="0.85"/><stop offset="1" stop-color="#1a2c44" stop-opacity="0"/></radialGradient>
<radialGradient id="dk" cx="50%" cy="50%" r="50%"><stop offset="0" stop-color="#060e18" stop-opacity="0.8"/><stop offset="1" stop-color="#060e18" stop-opacity="0"/></radialGradient>
<linearGradient id="ld" x1="0" y1="0" x2="1" y2="0"><stop offset="0" stop-color="#56684b"/><stop offset="0.45" stop-color="#4a5e40"/><stop offset="1" stop-color="#566a4a"/></linearGradient>
<linearGradient id="oc" x1="0" y1="0" x2="0" y2="1"><stop offset="0" stop-color="#0c1a2c"/><stop offset="0.4" stop-color="#0d1c2f"/><stop offset="1" stop-color="#0a1726"/></linearGradient>
<filter id="bl" x="-20%" y="-20%" width="140%" height="140%"><feGaussianBlur stdDeviation="1.6"/></filter>
<filter id="nz" x="0" y="0" width="100%" height="100%"><feTurbulence type="fractalNoise" baseFrequency="0.11" numOctaves="3" seed="7"/><feColorMatrix type="matrix" values="0 0 0 0 0.52  0 0 0 0 0.58  0 0 0 0 0.42  1.3 0 0 0 -0.5"/></filter>
<filter id="nz2" x="0" y="0" width="100%" height="100%"><feTurbulence type="fractalNoise" baseFrequency="0.2" numOctaves="2" seed="11"/><feColorMatrix type="matrix" values="0 0 0 0 0.16  0 0 0 0 0.22  0 0 0 0 0.16  0 1.4 0 0 -0.6"/></filter>
<filter id="nzo" x="0" y="0" width="100%" height="100%"><feTurbulence type="fractalNoise" baseFrequency="0.05" numOctaves="3" seed="5"/><feColorMatrix type="matrix" values="0 0 0 0 0.16  0 0 0 0 0.26  0 0 0 0 0.36  0.9 0 0 0 -0.38"/></filter>
<clipPath id="hc"><polygon points="75.0,71.9 81.7,67.1 93.1,65.2 104.6,67.1 116.0,70.0 136.0,68.0 126.0,65.2 145.0,67.1 164.1,68.0 175.5,73.8 183.1,80.4 192.7,83.3 206.0,87.1 217.4,92.8 228.9,98.5 240.3,104.2 249.8,110.0 244.1,113.8 234.6,116.6 217.4,115.7 206.0,114.7 190.8,114.7 183.1,114.7 175.5,116.6 167.9,118.5 156.5,123.3 148.9,124.2 137.4,130.9 133.6,138.5 129.8,140.4 136.0,138.5 131.2,134.7 125.5,125.2 116.0,122.3 104.6,122.3 93.1,121.4 74.1,122.3 64.6,129.0 60.8,125.2 47.4,118.5 43.6,111.9 49.3,108.0 64.6,106.1 83.6,107.1 98.9,108.0 110.3,110.0 104.6,102.3 101.7,94.7 100.8,86.1 95.0,79.5 85.5,75.7 75.0,73.8"/><polygon points="-5.0,33.1 0.3,33.8 13.2,36.1 25.4,40.7 37.6,46.8 46.8,52.1 53.6,55.9 55.9,57.8 48.3,59.0 36.1,62.0 20.9,65.1 7.1,66.6 0.3,68.1 -5.0,68.4"/></clipPath>
</defs>
<rect x="0" y="0" width="251" height="348" fill="url(#oc)"/>
<rect x="0" y="0" width="251" height="348" filter="url(#nzo)" opacity="0.22"/>
<ellipse cx="235" cy="25" rx="60" ry="45" fill="url(#dk)" opacity="0.9"/>
<ellipse cx="150" cy="5" rx="60" ry="25" fill="url(#sh)" opacity="0.6"/>
<ellipse cx="165" cy="45" rx="35" ry="22" fill="url(#sh)" opacity="0.7"/>
<ellipse cx="205" cy="60" rx="28" ry="18" fill="url(#sh)" opacity="0.55"/>
<ellipse cx="40" cy="15" rx="50" ry="20" fill="url(#sh)" opacity="0.35"/>
<ellipse cx="200" cy="175" rx="60" ry="40" fill="url(#sh)" opacity="0.35"/>
<ellipse cx="130" cy="230" rx="120" ry="60" fill="url(#dk)" opacity="0.7"/>
<ellipse cx="60" cy="95" rx="50" ry="22" fill="url(#dk)" opacity="0.6"/>
<g filter="url(#bl)"><polygon points="107.0,1.0 120.0,-2.0 136.7,-2.0 139.0,13.2 136.0,25.4 127.6,27.7 120.0,20.9 110.0,12.5" fill="#2a5f98" opacity="0.8"/>
<polygon points="113.9,-2.0 135.2,-2.0 136.0,7.1 127.6,11.7 118.4,7.1" fill="#58ace0" opacity="0.9"/></g>
<polygon points="67.4,30.8 69.6,24.7 80.3,21.6 88.7,16.3 91.3,11.4 90.2,20.9 84.1,28.5 74.2,31.8" fill="#858068"/>
<polygon points="-5.0,33.1 0.3,33.8 13.2,36.1 25.4,40.7 37.6,46.8 46.8,52.1 53.6,55.9 55.9,57.8 48.3,59.0 36.1,62.0 20.9,65.1 7.1,66.6 0.3,68.1 -5.0,68.4" fill="url(#ld)"/>
<polygon points="75.0,71.9 81.7,67.1 93.1,65.2 104.6,67.1 116.0,70.0 136.0,68.0 126.0,65.2 145.0,67.1 164.1,68.0 175.5,73.8 183.1,80.4 192.7,83.3 206.0,87.1 217.4,92.8 228.9,98.5 240.3,104.2 249.8,110.0 244.1,113.8 234.6,116.6 217.4,115.7 206.0,114.7 190.8,114.7 183.1,114.7 175.5,116.6 167.9,118.5 156.5,123.3 148.9,124.2 137.4,130.9 133.6,138.5 129.8,140.4 136.0,138.5 131.2,134.7 125.5,125.2 116.0,122.3 104.6,122.3 93.1,121.4 74.1,122.3 64.6,129.0 60.8,125.2 47.4,118.5 43.6,111.9 49.3,108.0 64.6,106.1 83.6,107.1 98.9,108.0 110.3,110.0 104.6,102.3 101.7,94.7 100.8,86.1 95.0,79.5 85.5,75.7 75.0,73.8" fill="url(#ld)"/>
<g clip-path="url(#hc)">
<rect x="0" y="0" width="251" height="200" filter="url(#nz)" opacity="0.55"/>
<rect x="0" y="0" width="251" height="200" filter="url(#nz2)" opacity="0.7"/>
<polygon points="78.9,97.6 85.5,96.6 90.3,98.9 83.6,100.4" fill="#2e3f30"/>
<ellipse cx="150" cy="92" rx="26" ry="9" fill="#66744f" opacity="0.5"/>
<ellipse cx="205" cy="110" rx="18" ry="6" fill="#66744f" opacity="0.45"/>
<ellipse cx="60" cy="118" rx="16" ry="5" fill="#35452f" opacity="0.5"/>
</g>
<path d="M128 73 L129.6 79 L128.8 85 L130.4 91.4 L125.8 96.7 L127.3 102 L122.7 108 L124.3 114 L128.8 121.8 L129.6 128" stroke="#d8d8c8" stroke-width="1.1" fill="none" opacity="0.7"/>
<path d="M178 117 L195 120 L215 115" stroke="#c050b0" stroke-width="2.2" fill="none" opacity="0.85"/>
<polygon points="82.0,349.0 91.0,339.0 104.0,336.0 111.0,328.0 113.0,317.0 128.0,313.5 145.0,316.0 149.0,325.0 141.0,332.0 124.0,337.0 118.0,346.0 116.0,349.0" fill="#5f6448"/>
<polygon points="114.0,318.0 128.0,314.5 143.0,317.0 146.0,324.0 134.0,326.0 121.0,326.0" fill="#858166"/>
<path d="M870 514 L880 505 L900 498 L912 490" transform="translate(-764,-166)" stroke="#d8d0c0" stroke-width="1" fill="none" opacity="0.7"/>
<polygon points="176.0,322.4 184.8,319.2 190.3,324.6 189.2,336.7 180.4,337.8 175.0,331.2" fill="#77735c"/>
<polygon points="171.0,349.0 184.0,343.0 201.0,342.0 221.0,344.0 231.0,349.0" fill="#6a6450"/>
<polygon points="211.0,317.0 221.0,318.0 226.0,321.0 216.0,320.0" fill="#48544a"/>
</svg>
<div class="t" style="left:223px;top:79.0px;font-size:16px;font-weight:400;color:rgba(170,175,190,0.09);line-height:12px;transform:scaleX(0.9);transform-origin:0 0;">CAN</div>
<div class="t" style="left:62px;top:88.0px;font-size:16px;font-weight:400;color:rgba(170,175,190,0.08);line-height:12px;transform:scaleX(0.9);transform-origin:0 0;">HAITI</div>
<div class="t" style="left:115.92294807370185px;top:-2.0px;font-size:8px;font-weight:400;color:#ececec;line-height:12px;transform:scaleX(0.84);transform-origin:0 0;text-shadow:0 0 1px #000,0 0 2px #000;">ISLANDS</div>
<div class="t" style="left:118.60301507537689px;top:6.1px;font-size:8px;font-weight:400;color:#ececec;line-height:12px;transform:scaleX(0.84);transform-origin:0 0;text-shadow:0 0 1px #000,0 0 2px #000;">(U.K.)</div>
<div class="t" style="left:149.42378559463987px;top:2.1px;font-size:8.5px;font-weight:400;color:#ececec;line-height:12px;transform:scaleX(0.82);transform-origin:0 0;text-shadow:0 0 1px #000,0 0 2px #000;">Grand Turk</div>
<div class="t" style="left:0.5px;top:22.0px;font-size:8.5px;font-weight:400;color:#ececec;line-height:12px;transform:scaleX(0.82);transform-origin:0 0;text-shadow:0 0 1px #000,0 0 2px #000;">guin</div>
<div class="t" style="left:22.12060301507538px;top:46.3px;font-size:8.5px;font-weight:400;color:#ececec;line-height:12px;transform:scaleX(0.82);transform-origin:0 0;text-shadow:0 0 1px #000,0 0 2px #000;">Guantánamo</div>
<div class="t" style="left:96.82747068676717px;top:53.3px;font-size:8.5px;font-weight:400;color:#ececec;line-height:12px;transform:scaleX(0.82);transform-origin:0 0;text-shadow:0 0 1px #000,0 0 2px #000;">Port-de-Paix</div>
<div class="t" style="left:117.59798994974875px;top:61.7px;font-size:8.5px;font-weight:400;color:#ececec;line-height:12px;transform:scaleX(0.82);transform-origin:0 0;text-shadow:0 0 1px #000,0 0 2px #000;">Cap-Haïtien</div>
<div class="t" style="left:164.499162479062px;top:57.3px;font-size:8.5px;font-weight:400;color:#ececec;line-height:12px;transform:scaleX(0.82);transform-origin:0 0;text-shadow:0 0 1px #000,0 0 2px #000;">Puerto Plata</div>
<div class="t" style="left:176.55946398659967px;top:66.4px;font-size:8.5px;font-weight:400;color:#ececec;line-height:12px;transform:scaleX(0.82);transform-origin:0 0;text-shadow:0 0 1px #000,0 0 2px #000;">San Francisco</div>
<div class="t" style="left:177.56448911222782px;top:73.7px;font-size:8.5px;font-weight:400;color:#ececec;line-height:12px;transform:scaleX(0.82);transform-origin:0 0;text-shadow:0 0 1px #000,0 0 2px #000;">de Macoris</div>
<div class="t" style="left:64.33165829145729px;top:81.1px;font-size:8.5px;font-weight:400;color:#ececec;line-height:12px;transform:scaleX(0.82);transform-origin:0 0;text-shadow:0 0 1px #000,0 0 2px #000;">Saint-Marc</div>
<div class="t" style="left:131.33333333333334px;top:81.1px;font-size:9px;font-weight:400;color:#ececec;line-height:12px;transform:scaleX(0.82);transform-origin:0 0;text-shadow:0 0 1px #000,0 0 2px #000;">Santiago</div>
<div class="t" style="left:168.85427135678393px;top:88.5px;font-size:8.5px;font-weight:400;color:#ececec;line-height:12px;transform:scaleX(0.82);transform-origin:0 0;text-shadow:0 0 1px #000,0 0 2px #000;">La Vega</div>
<div class="t" style="left:54.95142378559464px;top:96.2px;font-size:8.5px;font-weight:400;color:#ececec;line-height:12px;transform:scaleX(0.82);transform-origin:0 0;text-shadow:0 0 1px #000,0 0 2px #000;">Jérémie</div>
<div class="t" style="left:85.77219430485762px;top:97.5px;font-size:9px;font-weight:400;color:#ececec;line-height:12px;transform:scaleX(0.82);transform-origin:0 0;text-shadow:0 0 1px #000,0 0 2px #000;">Port-au-Prince</div>
<div class="t" style="left:82.42211055276383px;top:109.9px;font-size:8.5px;font-weight:400;color:#ececec;line-height:12px;transform:scaleX(0.82);transform-origin:0 0;text-shadow:0 0 1px #000,0 0 2px #000;">Jacmel</div>
<div class="t" style="left:117.93299832495813px;top:111.3px;font-size:8.5px;font-weight:400;color:#ececec;line-height:12px;transform:scaleX(0.82);transform-origin:0 0;text-shadow:0 0 1px #000,0 0 2px #000;">Barahona</div>
<div class="t" style="left:146.40871021775544px;top:101.9px;font-size:8.5px;font-weight:400;color:#ececec;line-height:12px;transform:scaleX(0.82);transform-origin:0 0;text-shadow:0 0 1px #000,0 0 2px #000;">San Juan</div>
<div class="t" style="left:188.28475711892798px;top:101.9px;font-size:9px;font-weight:400;color:#ececec;line-height:12px;transform:scaleX(0.82);transform-origin:0 0;text-shadow:0 0 1px #000,0 0 2px #000;">Santo Domingo</div>
<div class="t" style="left:160.47906197654942px;top:117.0px;font-size:8.5px;font-weight:400;color:#ececec;line-height:12px;transform:scaleX(0.82);transform-origin:0 0;text-shadow:0 0 1px #000,0 0 2px #000;">San Cristóbal</div>
<div class="t" style="left:219.10552763819098px;top:115.3px;font-size:8.5px;font-weight:400;color:#ececec;line-height:12px;transform:scaleX(0.82);transform-origin:0 0;text-shadow:0 0 1px #000,0 0 2px #000;">La Romana</div>
<svg style="position:absolute;left:91.3px;top:60.8px" width="6.4" height="6.4"><circle cx="3.2" cy="3.2" r="2.2" fill="#ffffff" /></svg>
<svg style="position:absolute;left:112.1px;top:69.2px" width="6.4" height="6.4"><circle cx="3.2" cy="3.2" r="2.2" fill="#ffffff" /></svg>
<svg style="position:absolute;left:95.3px;top:88.6px" width="6.4" height="6.4"><circle cx="3.2" cy="3.2" r="2.2" fill="#ffffff" /></svg>
<svg style="position:absolute;left:50.1px;top:103.7px" width="6.4" height="6.4"><circle cx="3.2" cy="3.2" r="2.2" fill="#ffffff" /></svg>
<svg style="position:absolute;left:100.3px;top:118.1px" width="6.4" height="6.4"><circle cx="3.2" cy="3.2" r="2.2" fill="#ffffff" /></svg>
<svg style="position:absolute;left:15.6px;top:54.4px" width="6.4" height="6.4"><circle cx="3.2" cy="3.2" r="2.2" fill="#e8d9c0" stroke="#b08060" stroke-width="0.8"/></svg>
<svg style="position:absolute;left:159.0px;top:65.8px" width="6.4" height="6.4"><circle cx="3.2" cy="3.2" r="2.2" fill="#e8d9c0" stroke="#b08060" stroke-width="0.8"/></svg>
<svg style="position:absolute;left:158.3px;top:76.9px" width="6.4" height="6.4"><circle cx="3.2" cy="3.2" r="2.2" fill="#e8d9c0" stroke="#b08060" stroke-width="0.8"/></svg>
<svg style="position:absolute;left:164.0px;top:85.3px" width="6.4" height="6.4"><circle cx="3.2" cy="3.2" r="2.2" fill="#e8d9c0" stroke="#b08060" stroke-width="0.8"/></svg>
<svg style="position:absolute;left:172.4px;top:82.6px" width="6.4" height="6.4"><circle cx="3.2" cy="3.2" r="2.2" fill="#e8d9c0" stroke="#b08060" stroke-width="0.8"/></svg>
<svg style="position:absolute;left:141.2px;top:99.3px" width="6.4" height="6.4"><circle cx="3.2" cy="3.2" r="2.2" fill="#e8d9c0" stroke="#b08060" stroke-width="0.8"/></svg>
<svg style="position:absolute;left:177.4px;top:112.7px" width="6.4" height="6.4"><circle cx="3.2" cy="3.2" r="2.2" fill="#e8d9c0" stroke="#b08060" stroke-width="0.8"/></svg>
<svg style="position:absolute;left:213.2px;top:111.4px" width="6.4" height="6.4"><circle cx="3.2" cy="3.2" r="2.2" fill="#e8d9c0" stroke="#b08060" stroke-width="0.8"/></svg>
<svg style="position:absolute;left:146.2px;top:119.4px" width="6.4" height="6.4"><circle cx="3.2" cy="3.2" r="2.2" fill="#e8d9c0" stroke="#b08060" stroke-width="0.8"/></svg>
<div style="position:absolute;left:145.2px;top:10.6px;width:3px;height:3px;border:1px solid #d04040;background:#fff"></div>
<svg style="position:absolute;left:105.8px;top:107.4px" width="7.6" height="7.6"><circle cx="3.8" cy="3.8" r="2.8" fill="#ffffff" stroke="#e03030" stroke-width="0.8"/></svg>
<svg style="position:absolute;left:183.5px;top:109.8px" width="7.6" height="7.6"><circle cx="3.8" cy="3.8" r="2.8" fill="#ffffff" stroke="#e03030" stroke-width="0.8"/></svg>
</div>
<div style="position:absolute;left:822px;top:372px;width:162px;height:108px;background:#ffffff"></div>
<svg style="position:absolute;left:817px;top:476px" width="10" height="10" viewBox="0 0 10 10"><path d="M5 0 L9 0 L3 7Z" fill="#fff"/></svg>
<svg style="position:absolute;left:817.4px;top:480.4px" width="7.2" height="7.2"><circle cx="3.6" cy="3.6" r="2.6" fill="#b8e06a" /></svg>
<svg style="position:absolute;left:861.0px;top:506.4px" width="7.2" height="7.2"><circle cx="3.6" cy="3.6" r="2.6" fill="#9ad048" /></svg>
<div class="t" style="left:830px;top:373.2px;font-size:10.5px;font-weight:400;color:#151515;line-height:10px;transform:scaleX(0.76);transform-origin:0 0;letter-spacing:0.5px;-webkit-text-stroke:0.45px #151515;">Ocupación:</div>
<div class="t" style="left:830px;top:382.6px;font-size:10.5px;font-weight:400;color:#151515;line-height:10px;transform:scaleX(0.76);transform-origin:0 0;letter-spacing:0.5px;-webkit-text-stroke:0.45px #151515;">ID: T_BAR_SEB_202401310</div>
<div class="t" style="left:830px;top:392.1px;font-size:10.5px;font-weight:400;color:#151515;line-height:10px;transform:scaleX(0.76);transform-origin:0 0;letter-spacing:0.5px;-webkit-text-stroke:0.45px #151515;">Gasoducto: CENTRO</div>
<div class="t" style="left:830px;top:401.5px;font-size:10.5px;font-weight:400;color:#151515;line-height:10px;transform:scaleX(0.76);transform-origin:0 0;letter-spacing:0.5px;-webkit-text-stroke:0.45px #151515;">Tramo: Barrancabermeja</div>
<div class="t" style="left:830px;top:411.0px;font-size:10.5px;font-weight:400;color:#151515;line-height:10px;transform:scaleX(0.76);transform-origin:0 0;letter-spacing:0.5px;-webkit-text-stroke:0.45px #151515;">Tipo: Troncal</div>
<div class="t" style="left:830px;top:420.4px;font-size:10.5px;font-weight:400;color:#151515;line-height:10px;transform:scaleX(0.76);transform-origin:0 0;letter-spacing:0.5px;-webkit-text-stroke:0.45px #151515;">Distrito: D</div>
<div class="t" style="left:830px;top:429.8px;font-size:10.5px;font-weight:400;color:#151515;line-height:10px;transform:scaleX(0.76);transform-origin:0 0;letter-spacing:0.5px;-webkit-text-stroke:0.45px #151515;">Clasificación:</div>
<div class="t" style="left:830px;top:439.3px;font-size:10.5px;font-weight:400;color:#151515;line-height:10px;transform:scaleX(0.76);transform-origin:0 0;letter-spacing:0.5px;-webkit-text-stroke:0.45px #151515;">Tipología:</div>
<div class="t" style="left:830px;top:448.7px;font-size:10.5px;font-weight:400;color:#151515;line-height:10px;transform:scaleX(0.76);transform-origin:0 0;letter-spacing:0.5px;-webkit-text-stroke:0.45px #151515;">Material:</div>
<div class="t" style="left:830px;top:458.2px;font-size:10.5px;font-weight:400;color:#151515;line-height:10px;transform:scaleX(0.76);transform-origin:0 0;letter-spacing:0.5px;-webkit-text-stroke:0.45px #151515;">Pk Campo:</div>
<div class="t" style="left:830px;top:467.6px;font-size:10.5px;font-weight:400;color:#151515;line-height:10px;transform:scaleX(0.76);transform-origin:0 0;letter-spacing:0.5px;-webkit-text-stroke:0.45px #151515;">Centerline:</div>
<div class="t" style="left:963px;top:479.5px;font-size:8px;font-weight:700;color:#e8e8e8;line-height:12px;transform:scaleX(0.9);transform-origin:0 0;text-shadow:0 0 1px #000;">CURAÇAO</div>
<div class="t" style="left:1004px;top:475.0px;font-size:8px;font-weight:700;color:#eee;line-height:12px;transform:scaleX(0.86);transform-origin:0 0;text-shadow:0 0 1px #000;">Kra</div>
<div class="t" style="left:858px;top:494.5px;font-size:8px;font-weight:700;color:#eee;line-height:12px;transform:scaleX(0.86);transform-origin:0 0;text-shadow:0 0 1px #000;">Riohacha</div>
<div class="t" style="left:961px;top:500.0px;font-size:8px;font-weight:700;color:#eee;line-height:12px;transform:scaleX(0.86);transform-origin:0 0;text-shadow:0 0 1px #000;">Coro</div>
</div></body></html>
